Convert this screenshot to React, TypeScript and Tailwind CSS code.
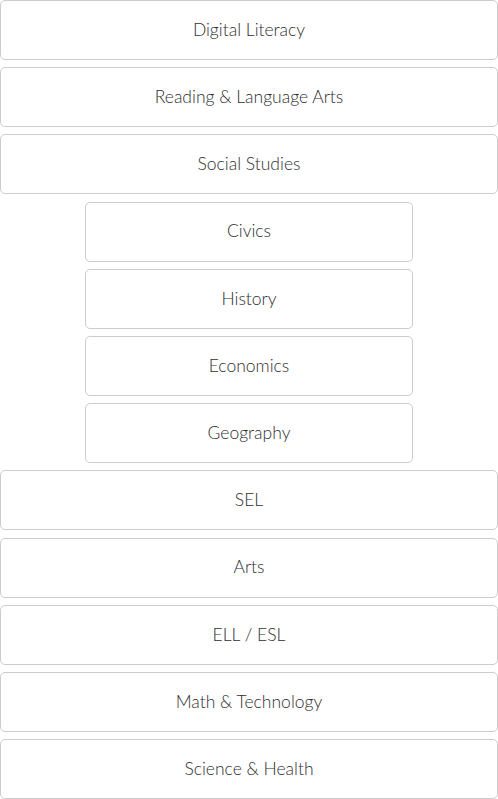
const topItems = ["Digital Literacy", "Reading & Language Arts", "Social Studies"];
const subItems = ["Civics", "History", "Economics", "Geography"];
const bottomItems = ["SEL", "Arts", "ELL / ESL", "Math & Technology", "Science & Health"];

const SubjectButton = ({ label, nested }: { label: string; nested?: boolean }) => {
  return (
    <button
      className={
        nested
          ? "mx-auto flex h-[60px] w-[66%] items-center justify-center rounded-[5px] border border-[#cccccc] bg-white text-[17.5px] font-light text-[#2e2e2e]"
          : "flex h-[60px] w-full items-center justify-center rounded-[5px] border border-[#cccccc] bg-white text-[17.5px] font-light text-[#2e2e2e]"
      }
    >
      {label}
    </button>
  );
};

export default function App() {
  return (
    <div className="flex w-[498px] flex-col gap-[7.2px] bg-white font-['Lato',sans-serif]">
      {topItems.map((item) => (
        <SubjectButton key={item} label={item} />
      ))}
      {subItems.map((item) => (
        <SubjectButton key={item} label={item} nested />
      ))}
      {bottomItems.map((item) => (
        <SubjectButton key={item} label={item} />
      ))}
    </div>
  );
}
